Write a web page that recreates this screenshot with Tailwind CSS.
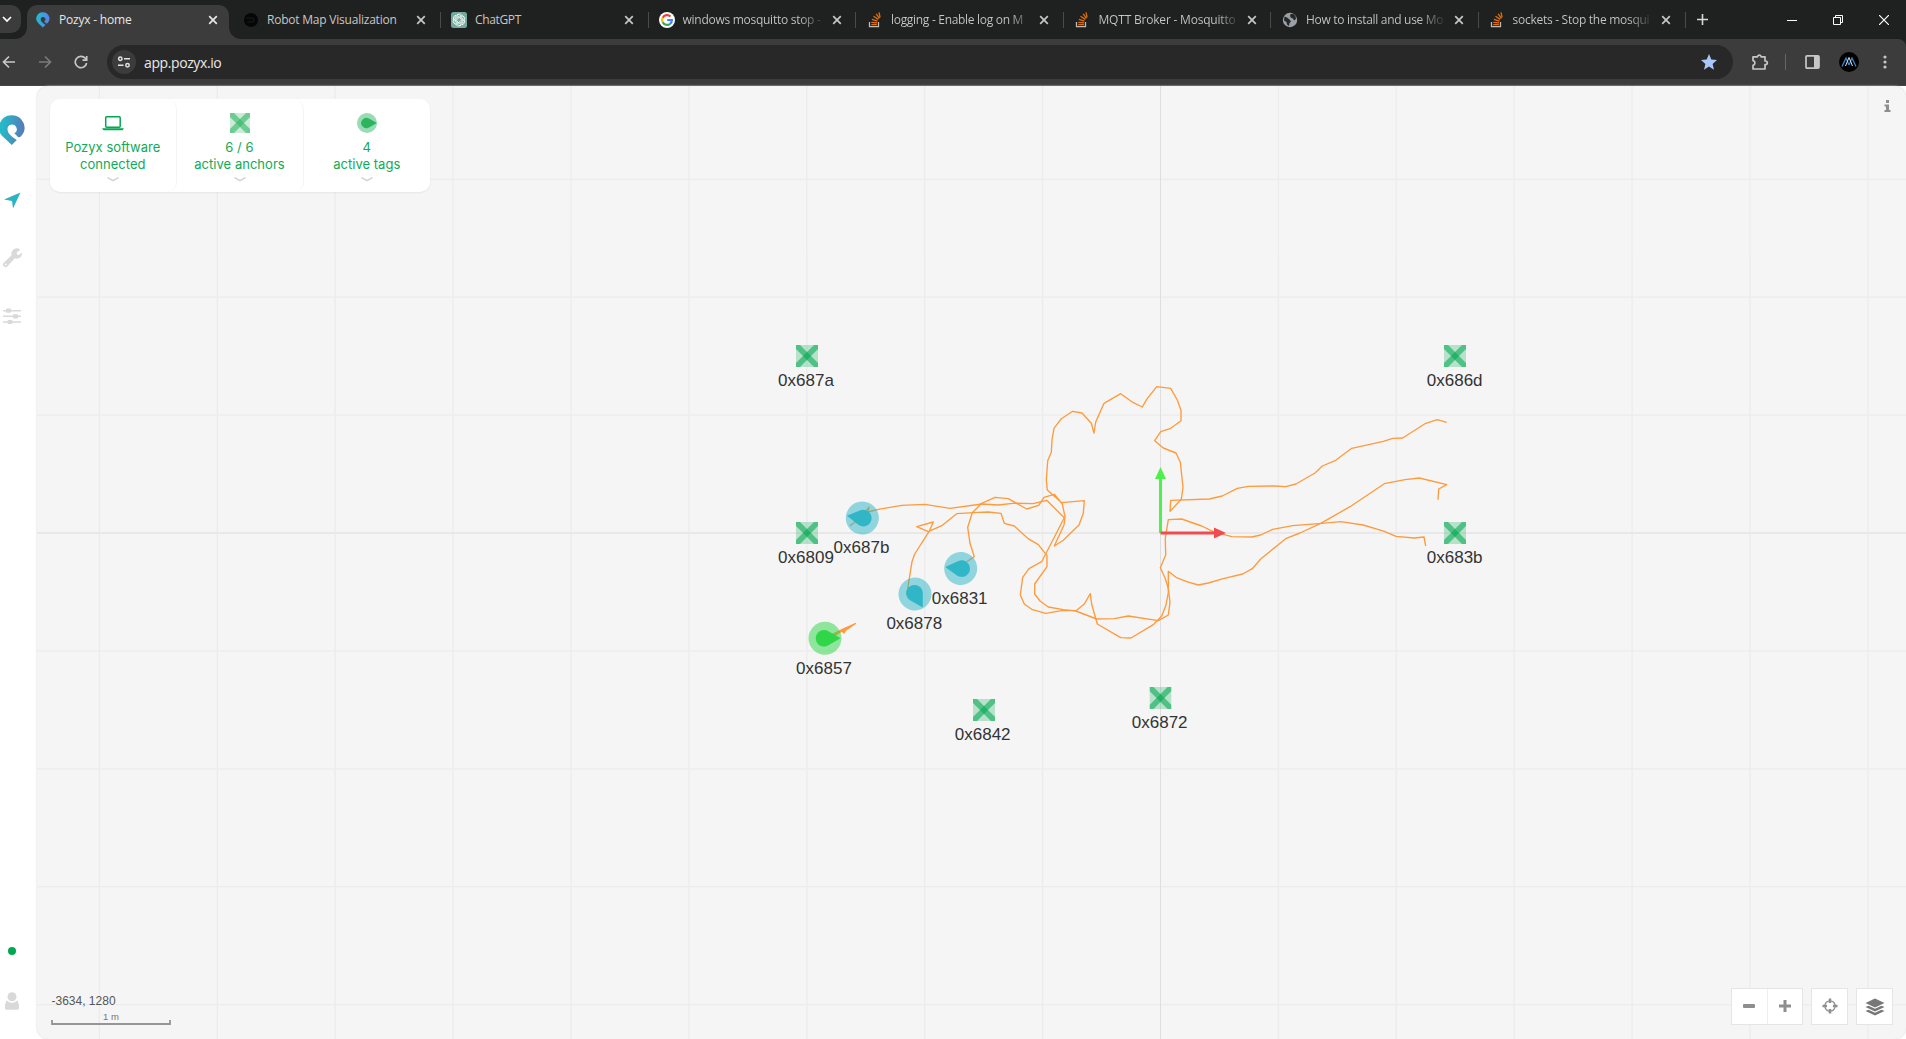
<!DOCTYPE html>
<html lang="en">
<head>
<meta charset="utf-8">
<title>Pozyx - home</title>
<script src="https://cdn.jsdelivr.net/npm/@tailwindcss/browser@4"></script>
</head>
<body class="h-screen w-screen overflow-hidden bg-white">
<svg width="0" height="0" class="absolute">
  <defs>
    <linearGradient id="brand" x1="0" x2="1" y1="0.3" y2="0.45"><stop offset="0.15" stop-color="#27b8c8"/><stop offset="1" stop-color="#5a78b8"/></linearGradient>
    <linearGradient id="brandTab" x1="0" x2="1" y1="0.3" y2="0.45"><stop offset="0.1" stop-color="#25b8cc"/><stop offset="1" stop-color="#5c7ff0"/></linearGradient>
    <symbol id="pin" viewBox="0 0 26 31">
      <path d="M13 .3A12.400 12.400 0 0 1 22 21.300Q20.700 22.700 19.300 22.200L15.300 18.300A4.600 4.600 0 1 0 8.600 15C8.800 18.500 12.500 21.500 17.800 24.900L12.800 30 4 21.800A12.400 12.400 0 0 1 13 .3Z"/>
    </symbol>
    <symbol id="x" viewBox="0 0 10 10"><path d="M1.200 1.200 8.800 8.800M8.800 1.200 1.200 8.800" fill="none" stroke="currentColor" stroke-width="1.700"/></symbol>
    <symbol id="so" viewBox="0 0 16 16">
      <path d="M2.500 10v4.700h9V10" fill="none" stroke="#bcbbbb" stroke-width="1.300"/>
      <path d="M4.300 12.700h5.600M4.300 10.300l5.700.5M4.900 7.400l5.500 1.700M6.500 4.300l4.800 3.100M9.200 1.800l3.200 4.500M12 .3l1.100 5" fill="none" stroke="#e2700f" stroke-width="1.300"/>
    </symbol>
    <symbol id="anchor" viewBox="0 0 22 22">
      <path d="M0 0H22V22H0Z" fill="#00a84f" fill-opacity=".25"/>
      <path d="M0 0H4L22 18V22H18L0 4Z" fill="#00a84f" fill-opacity=".56"/>
      <path d="M22 0H18L0 18V22H4L22 4Z" fill="#00a84f" fill-opacity=".56"/>
    </symbol>
    <symbol id="anchorSoft" viewBox="0 0 20 20">
      <path d="M0 0H20V20H0Z" fill="#c9ecd7"/>
      <path d="M0 0H4L20 16V20H16L0 4Z" fill="#34b566" fill-opacity=".6"/>
      <path d="M20 0H16L0 16V20H4L20 4Z" fill="#34b566" fill-opacity=".6"/>
    </symbol>
    <g id="tag"><circle r="16.500" fill-opacity=".5"/><path d="M15.500 0 3 -7.300A8.300 8.300 0 1 0 3 7.300Z" fill-opacity=".95"/></g>
  </defs>
</svg>
<div class="flex h-full flex-col">

  <!-- Tab strip -->
  <header class="flex h-[39px] shrink-0 bg-[#1f2120] font-['Open_Sans',sans-serif] text-[12px] text-[#c7c7c7]">
    <div class="flex w-[27px] bg-[#3c3c3c]">
      <div class="w-full rounded-br-xl bg-[#1f2120] pt-[5px]">
        <div class="flex h-7 w-[21px] items-center rounded-r-[10px] bg-[#3c3c3c] pl-[2px] text-white"><svg width="10" height="10" viewBox="0 0 10 10"><path d="M1 3l4 4 4-4" fill="none" stroke="currentColor" stroke-width="1.700"/></svg></div>
      </div>
    </div>
    <div class="flex w-[202px] bg-[#1f2120] pt-[5px]">
      <div class="flex w-full items-center rounded-t-[10px] bg-[#3c3c3c] pr-[11px] pb-[5px] pl-2 text-[#e6e6e6]">
        <svg class="mr-2 h-4 w-4" fill="url(#brandTab)"><use href="#pin"/></svg>
        <span class="flex-1 whitespace-nowrap tracking-[-0.2px]">Pozyx - home</span>
        <svg class="h-[10px] w-[10px]"><use href="#x"/></svg>
      </div>
    </div>
    <div class="flex w-[211px] bg-[#3c3c3c]">
      <div class="flex w-full items-center rounded-bl-xl bg-[#1f2120] pr-[14px] pl-[14px]">
        <svg class="mr-[8px]" width="16" height="16" viewBox="0 0 16 16"><circle cx="8" cy="8" r="7" fill="#060606"/><path d="M3.500 6h5.500a2 2 0 0 1 0 4H4.500" fill="none" stroke="#1a1a1a" stroke-width="1.200"/></svg>
        <span class="flex-1 whitespace-nowrap tracking-[-0.22px]">Robot Map Visualization</span>
        <svg class="h-[10px] w-[10px]"><use href="#x"/></svg>
      </div>
    </div>
    <div class="flex w-[207.500px] items-center">
      <i class="h-4 w-px bg-[#4a4a4a]"></i>
      <svg class="ml-[10px]" width="16" height="16" viewBox="0 0 16 16"><rect width="16" height="16" rx="2.500" fill="#74aa9c"/><g fill="none" stroke="#eef7f4" stroke-width=".85"><path id="lobe" d="M6 8V4.300a2.500 2.500 0 0 1 4.600-1.200M6 5.500l3.300-1.900a2.400 2.400 0 0 1 3.500 1.900"/><use href="#lobe" transform="rotate(60 8 8)"/><use href="#lobe" transform="rotate(120 8 8)"/><use href="#lobe" transform="rotate(180 8 8)"/><use href="#lobe" transform="rotate(240 8 8)"/><use href="#lobe" transform="rotate(300 8 8)"/></g></svg>
      <span class="ml-2 w-[142px] whitespace-nowrap tracking-[-0.35px]">ChatGPT</span>
      <svg class="ml-[7px] h-[10px] w-[10px]"><use href="#x"/></svg>
    </div>
    <div class="flex w-[207.500px] items-center">
      <i class="h-4 w-px bg-[#4a4a4a]"></i>
      <svg class="ml-[10px]" width="16" height="16" viewBox="0 0 16 16"><circle cx="8" cy="8" r="8" fill="#fff"/><g fill="none" stroke-width="2.200"><path d="M11.500 4.600A4.900 4.900 0 0 0 3.700 5.700" stroke="#ea4335"/><path d="M3.700 5.700a4.900 4.900 0 0 0 0 4.600" stroke="#fbbc05"/><path d="M3.700 10.300a4.900 4.900 0 0 0 7.400 1.500" stroke="#34a853"/><path d="M11.100 11.800A4.900 4.900 0 0 0 12.900 8H8.200" stroke="#4285f4"/></g></svg>
      <span class="ml-2 w-[142px] bg-linear-to-r from-[#c7c7c7] from-82% to-transparent bg-clip-text whitespace-nowrap tracking-[-0.27px] text-transparent">windows mosquitto stop -</span>
      <svg class="ml-[7px] h-[10px] w-[10px]"><use href="#x"/></svg>
    </div>
    <div class="flex w-[207.500px] items-center">
      <i class="h-4 w-px bg-[#4a4a4a]"></i>
      <svg class="ml-[11px] h-4 w-4"><use href="#so"/></svg>
      <span class="ml-2 w-[141px] bg-linear-to-r from-[#c7c7c7] from-85% to-transparent bg-clip-text whitespace-nowrap tracking-[-0.3px] text-transparent">logging - Enable log on M</span>
      <svg class="ml-[7px] h-[10px] w-[10px]"><use href="#x"/></svg>
    </div>
    <div class="flex w-[207.500px] items-center">
      <i class="h-4 w-px bg-[#4a4a4a]"></i>
      <svg class="ml-[10px] h-4 w-4"><use href="#so"/></svg>
      <span class="ml-[9px] w-[141px] bg-linear-to-r from-[#c7c7c7] from-85% to-transparent bg-clip-text whitespace-nowrap tracking-[-0.2px] text-transparent">MQTT Broker - Mosquitto</span>
      <svg class="ml-[7px] h-[10px] w-[10px]"><use href="#x"/></svg>
    </div>
    <div class="flex w-[207.500px] items-center">
      <i class="h-4 w-px bg-[#4a4a4a]"></i>
      <svg class="ml-[11px]" width="16" height="16" viewBox="0 0 16 16"><circle cx="8" cy="8" r="7.200" fill="#9aa0a6"/><path d="M2.500 4.500 5 5.500 7.500 7.500 9 9.500 7.500 11 7 14 5 12.500 4.500 10 2 8.500ZM8 2.500 11 1.500 13.500 4 14 7 12 8.500 11 6.500 8.500 5.500Z" fill="#26292b"/></svg>
      <span class="ml-2 w-[141px] bg-linear-to-r from-[#c7c7c7] from-80% to-transparent bg-clip-text whitespace-nowrap tracking-[-0.3px] text-transparent">How to install and use Mo</span>
      <svg class="ml-[7px] h-[10px] w-[10px]"><use href="#x"/></svg>
    </div>
    <div class="flex w-[207px] items-center">
      <i class="h-4 w-px bg-[#4a4a4a]"></i>
      <svg class="ml-[10px] h-4 w-4"><use href="#so"/></svg>
      <span class="ml-2 w-[141px] bg-linear-to-r from-[#c7c7c7] from-82% to-transparent bg-clip-text whitespace-nowrap tracking-[-0.27px] text-transparent">sockets - Stop the mosqui</span>
      <svg class="ml-[7px] h-[10px] w-[10px]"><use href="#x"/></svg>
    </div>
    <div class="flex flex-1 items-center">
      <i class="h-4 w-px bg-[#4a4a4a]"></i>
      <svg class="ml-[11px]" width="11" height="11" viewBox="0 0 11 11"><path d="M5.500 0v11M0 5.500h11" stroke="#d8d8d8" stroke-width="1.600"/></svg>
      <div class="ml-auto flex items-center gap-9 pr-[17px]">
        <svg width="10" height="10" viewBox="0 0 10 10"><path d="M0 5.500h10" stroke="#fff"/></svg>
        <svg width="10" height="10" viewBox="0 0 10 10"><path d="M.5 2.500h7v7h-7ZM2.500 2.500v-2h7v7h-2" fill="none" stroke="#fff"/></svg>
        <svg width="10" height="10" viewBox="0 0 10 10"><path d="M0 0 10 10M10 0 0 10" stroke="#fff" stroke-width="1.200"/></svg>
      </div>
    </div>
  </header>

  <!-- Address bar -->
  <div class="shrink-0 bg-[#1f2120]">
    <div class="flex h-[47px] items-center rounded-tr-lg border-b border-[#4a4446] bg-[#3c3c3c] pr-[15px] pl-[2px] text-[#c7c7c7]">
      <svg width="14" height="14" viewBox="0 0 14 14"><path d="M13 7H2M7 1.500 1.500 7 7 12.500" fill="none" stroke="currentColor" stroke-width="1.700"/></svg>
      <svg class="ml-[22px] text-[#7b7b7b]" width="14" height="14" viewBox="0 0 14 14"><path d="M1 7h11M7 1.500 12.500 7 7 12.500" fill="none" stroke="currentColor" stroke-width="1.700"/></svg>
      <svg class="ml-[22px]" width="14" height="14" viewBox="0 0 14 14"><path d="M12.600 8A5.700 5.700 0 1 1 11.300 3.300L12.300 4.500M12.700 1v4.200H8.500" fill="none" stroke="currentColor" stroke-width="1.700"/></svg>
      <div class="ml-[19px] flex h-[34px] w-[1626px] items-center rounded-full bg-[#282828] pr-4 pl-[5px]">
        <span class="flex h-6 w-6 items-center justify-center rounded-full bg-[#3c3c3c]"><svg width="14" height="12" viewBox="0 0 14 12"><g fill="none" stroke="#e3e3e3" stroke-width="1.500"><circle cx="3.300" cy="2.700" r="1.700"/><path d="M7 2.700h6M1 9.300h5.500"/><circle cx="10.500" cy="9.300" r="1.700"/></g></svg></span>
        <span class="ml-2 flex-1 font-['Open_Sans',sans-serif] text-[14px] tracking-[-0.4px] text-[#e8e8e8]">app.pozyx.io</span>
        <svg width="16" height="16" viewBox="0 0 16 16"><path d="M8 0l2.300 5.600 5.700.500-4.400 3.800L13 15.700 8 12.600 3 15.700 4.400 9.900 0 6.100l5.700-.5Z" fill="#a8c7fa"/></svg>
      </div>
      <svg class="ml-[18px]" width="18" height="18" viewBox="0 0 18 18"><path d="M2 3.800H6.500V3.300a2 2 0 0 1 3.600 0V3.800H14V8h.5a1.800 1.800 0 0 1 0 3.600H14V16H2V12.300a2.400 2.400 0 0 0 0-4.700Z" fill="none" stroke="currentColor" stroke-width="1.700" stroke-linejoin="round"/></svg>
      <i class="ml-[16px] h-4 w-px bg-[#666]"></i>
      <svg class="ml-[19px]" width="15" height="14" viewBox="0 0 15 14"><rect x="1" y=".9" width="13" height="12.200" rx="1" fill="none" stroke="currentColor" stroke-width="1.700"/><path d="M9 1h5v12H9Z" fill="currentColor"/></svg>
      <svg class="ml-[19px]" width="20" height="20" viewBox="0 0 20 20"><circle cx="10" cy="10" r="10" fill="#000"/><path d="M3 14.500 7 6l3 7M17 14.500 13 6l-3 7" fill="none" stroke="#3b86c8" stroke-width="1.300"/><path d="M6.500 14 10 5.500l3.500 8.500" fill="none" stroke="#d7e5f0" stroke-width="1"/></svg>
      <svg class="ml-auto mr-1" width="4" height="14" viewBox="0 0 4 14"><g fill="currentColor"><circle cx="2" cy="2" r="1.600"/><circle cx="2" cy="7" r="1.600"/><circle cx="2" cy="12" r="1.600"/></g></svg>
    </div>
  </div>

  <!-- App -->
  <div class="flex min-h-0 flex-1">
    <nav class="flex w-[37px] shrink-0 flex-col items-start rounded-r-xl bg-white text-[#d9d9d9]">
      <svg class="mt-[29px] -ml-[1px]" width="26" height="31" fill="url(#brand)"><use href="#pin"/></svg>
      <svg class="mt-[46px] ml-1" width="17" height="17" viewBox="0 0 17 17"><path d="M16.500.5 9 16.500 8 9 0 7.500Z" fill="#2cb4c5"/></svg>
      <svg class="mt-[39px] ml-[2px]" width="20" height="20" viewBox="0 0 20 20"><path d="M18.300 1.700 14.700 4.500l.3 2 2 .5L20 4.500A5.400 5.400 0 0 1 12.700 10.300L5.500 18.200A2.500 2.500 0 0 1 1.700 14.700L9.600 7.300A5.400 5.400 0 0 1 18.300 1.700Z" fill="currentColor"/><circle cx="3.800" cy="16.300" r=".9" fill="#fff"/></svg>
      <svg class="mt-[40px] ml-[3px]" width="18" height="17" viewBox="0 0 18 17"><path d="M0 2.700h18M0 8.300h18M0 14h18" stroke="currentColor" stroke-width="1.500"/><g fill="currentColor"><rect x="3" y=".6" width="5" height="4.200" rx="1"/><rect x="10" y="6.200" width="5" height="4.200" rx="1"/><rect x="4.500" y="11.900" width="5" height="4.200" rx="1"/></g></svg>
      <i class="mt-auto ml-2 h-2 w-2 rounded-full bg-[#00a84f]"></i>
      <svg class="mt-[37px] mb-[29px] ml-1" width="16" height="18" viewBox="0 0 16 18"><circle cx="8" cy="4.700" r="4.500" fill="currentColor"/><path d="M3 8.500a6.300 6.300 0 0 0 10 0c2 1.500 3 8.500 1 9.300H2C0 17 1 10 3 8.500Z" fill="currentColor"/></svg>
    </nav>

    <main class="relative flex-1 overflow-hidden rounded-xl bg-[#f5f5f5] shadow-[0_0_2px_#ccc]">
      <svg class="absolute inset-0 font-['Liberation_Sans',sans-serif]" width="1869" height="953" viewBox="37 86 1869 953">
        <g fill="none" stroke="#ececec" stroke-width="1.300">
          <path d="M99.400 86V1039M217.300 86V1039M335.200 86V1039M453.100 86V1039M571 86V1039M688.900 86V1039M806.800 86V1039M924.700 86V1039M1042.600 86V1039M1278.400 86V1039M1396.300 86V1039M1514.200 86V1039M1632.100 86V1039M1750 86V1039M1867.900 86V1039"/>
          <path d="M37 179.300H1906M37 297.200H1906M37 415.100H1906M37 650.900H1906M37 768.800H1906M37 886.700H1906M37 1004.600H1906"/>
          <path d="M37 533H1906" stroke="#e8e8e8" stroke-width="2"/>
          <path d="M1160.500 86V1039" stroke="#dedede" stroke-width="1"/>
        </g>
        <!-- Tag trails -->
        <g fill="none" stroke="#ff9a3d" stroke-width="1.350" stroke-linejoin="round">
          <polyline points="850,525.700 860,518.300 869,507.300 868,512 878.300,509.300 901.700,505.300 925,504.300 950,508.300 981.700,504 998.300,505 1015,503.200 1033,503.700 1046.700,500.300 1064.300,517.700 1041.700,561.700 1029,568.700 1022.700,577.300 1020.300,595 1024.300,604 1031.700,609.300 1045.700,613.300 1061.700,610.700 1076.700,610.300 1084.300,604 1090.300,593.700 1091.700,604.300 1097.300,624 1120.700,637.700 1131,638 1153.300,624.700 1161.700,616 1166,605 1168.300,592.700 1168.300,571.300 1176,577.300 1186.700,581.700 1198.300,585 1208.300,583 1223.300,578.700 1242.700,574 1252.300,568.700 1260.700,559 1285.700,538.700 1300,533 1320.700,523.300 1350,506.700 1384.300,483.700 1405,479.700 1419.300,478 1446.700,484.700 1438.700,489 1438,499.700"/>
          <polyline points="966.700,561.700 974.300,556.700 970,543.300 967.700,527.300 972.300,512.700 981.700,503.300 995,497.300 1008.300,498.700 1026.700,509 1038.700,505.300 1044,497.300 1054.300,494.300 1062.300,504 1065,516.700 1064,525 1054.300,546 1063.300,540.300 1079,525 1083.300,513.300 1084.300,500.700 1061.700,502.700 1047.300,490 1046.300,480 1047.700,460.700 1051.300,452.300 1052,440 1054,428.300 1061.300,418.700 1072.700,411.300 1082,413 1091.300,423.300 1094,433 1095.700,422 1104,403.300 1120.700,393.700 1133.300,402.700 1142.300,407 1146.700,399.300 1156.700,386.700 1170.700,388.300 1177.300,400 1181,410.300 1181,420.700 1170.700,428.300 1160.700,431.700 1154.700,440.700 1163.300,448 1176,453 1180.300,462.300 1183,487.300 1181.300,499.300 1170,511.300 1170.700,500.300 1209.300,499 1222.300,496 1237.300,488.300 1248.300,486.300 1274.300,486 1285.700,486.700 1296,484 1315,473 1322.300,466 1335.700,460.300 1351.700,448.300 1383.300,441.300 1392.700,438.300 1402.700,438 1425.700,423.300 1437.300,419.700 1446.700,422.300"/>
          <polyline points="906.700,595 912,561.700 914.700,554 929,531.700 933.300,522 916.700,526.700 928.300,531.700 942.300,525.300 956.700,513.700 978,512.300 988.300,512 1001,513.300 1004.300,523.300 1014.300,526 1027.700,538.300 1038.300,544.700 1047,555.700 1047,566.700 1034.700,584 1034.700,594 1040,601 1048.300,607 1063.300,609.700 1075.700,611 1096.700,619 1114.300,618.700 1128.300,616 1158.300,620.700 1168.300,615 1170,602.300 1168.300,588.300 1165,577.700 1160.300,567.700 1165.700,555 1165.300,538.300 1168.300,519.700 1181.700,519 1201.700,526 1213.300,531.700 1231.700,536.700 1251.700,537 1260.700,535 1272.700,529.300 1292.700,525.700 1321.700,523.300 1340.700,521.700 1363.300,525 1384.300,531.300 1396,536.300 1414,538 1424,537 1425.700,546"/>
          <path d="M832 634.500 843 629 855.500 623.500 846 630 844 633 842 631 834 636Z" fill="#ff9a3d"/>
        </g>
        <!-- Origin axes -->
        <path d="M1160.500 533V476" stroke="#4ef04c" stroke-width="3"/><path d="M1155 479 1160.500 467 1166 479Z" fill="#4ef04c"/>
        <path d="M1160.500 533H1217" stroke="#f04c50" stroke-width="3"/><path d="M1214 527.500 1226 533 1214 538.500Z" fill="#f04c50"/>
        <!-- Anchors -->
        <use href="#anchor" x="796" y="345" width="22" height="22"/><use href="#anchor" x="796" y="522" width="22" height="22"/>
        <use href="#anchor" x="1444" y="345" width="22" height="22"/><use href="#anchor" x="1444" y="522" width="22" height="22"/>
        <use href="#anchor" x="973" y="699" width="22" height="22"/><use href="#anchor" x="1149.500" y="687" width="22" height="22"/>
        <!-- Tags -->
        <use href="#tag" transform="translate(862.300 518) rotate(188)" fill="#2cb4c5"/>
        <use href="#tag" transform="translate(960.700 568.500) rotate(186)" fill="#2cb4c5"/>
        <use href="#tag" transform="translate(915 594) rotate(60)" fill="#2cb4c5"/>
        <use href="#tag" transform="translate(825 638.300)" fill="#2ad643"/>
        <g fill="#333" font-size="17" text-anchor="middle">
          <text x="806" y="386">0x687a</text><text x="806" y="563">0x6809</text><text x="861.500" y="553">0x687b</text><text x="959.700" y="603.500">0x6831</text><text x="914.300" y="629">0x6878</text><text x="824" y="673.500">0x6857</text><text x="982.700" y="739.500">0x6842</text><text x="1159.700" y="727.500">0x6872</text><text x="1454.700" y="386">0x686d</text><text x="1454.700" y="563">0x683b</text>
        </g>
        <text x="51.500" y="1005" font-size="12" fill="#555">-3634, 1280</text>
        <text x="111" y="1020" font-size="9.500" fill="#777" text-anchor="middle">1 m</text>
        <path d="M52 1020v4h118v-4" fill="none" stroke="#959595" stroke-width="1.800"/>
      </svg>

      <!-- Status summary -->
      <section class="absolute top-[13px] left-[13px] flex h-[93px] w-[380px] rounded-[10px] bg-white text-center font-['Inter',sans-serif] text-[13px] leading-[17px] tracking-[0.03px] text-[#10aa58] shadow-[0_1px_2px_#0001]">
        <div class="flex w-[126.500px] flex-col items-center rounded-r-[10px] border-r border-[#f4f4f4] pt-[14px]">
          <svg width="22" height="20" viewBox="0 0 22 20"><rect x="3.700" y="3.700" width="14.500" height="10.600" rx="1" fill="none" stroke="#00a84f" stroke-width="1.500"/><path d="M0 15.300H22L20.500 17.300H1.500Z" fill="#00a84f"/></svg>
          <p class="mt-[6px]">Pozyx software<br>connected</p>
          <svg class="mt-1" width="12" height="5" viewBox="0 0 12 5"><path d="M.5.700 6 3.700 11.500.7" fill="none" stroke="#d2d2d2" stroke-width="1.500"/></svg>
        </div>
        <div class="flex w-[127px] flex-col items-center rounded-r-[10px] border-r border-[#f4f4f4] pt-[14px]">
          <svg width="20" height="20"><use href="#anchorSoft"/></svg>
          <p class="mt-[6px]">6 / 6<br>active anchors</p>
          <svg class="mt-1" width="12" height="5" viewBox="0 0 12 5"><path d="M.5.700 6 3.700 11.500.7" fill="none" stroke="#d2d2d2" stroke-width="1.500"/></svg>
        </div>
        <div class="flex flex-1 flex-col items-center pt-[14px]">
          <svg width="20" height="20" viewBox="0 0 20 20"><circle cx="10" cy="10" r="10" fill="#99dbb5"/><path d="M19.800 10 12 5.500A5.200 5.200 0 1 0 12 14.500Z" fill="#2db55d"/></svg>
          <p class="mt-[6px]">4<br>active tags</p>
          <svg class="mt-1" width="12" height="5" viewBox="0 0 12 5"><path d="M.5.700 6 3.700 11.500.7" fill="none" stroke="#d2d2d2" stroke-width="1.500"/></svg>
        </div>
      </section>

      <svg class="absolute top-[14px] right-[15px]" width="7" height="12" viewBox="0 0 7 12"><path d="M2 0H5V3H2ZM.5 4.500H5V10H6.500V12H.5V10H2V6.500H.5Z" fill="#8e8e8e"/></svg>

      <!-- Map controls -->
      <div class="absolute right-[13px] bottom-[14px] flex gap-2 text-[#8e8e8e]">
        <div class="flex h-[37px] w-[72px] border border-[#e5e5e5] bg-white">
          <button class="flex flex-1 items-center justify-center border-r border-[#eee] pb-[2px]"><svg width="12" height="12" viewBox="0 0 12 12"><rect y="4" width="12" height="4" rx="1" fill="currentColor"/></svg></button>
          <button class="flex flex-1 items-center justify-center pb-[2px]"><svg width="12" height="12" viewBox="0 0 12 12"><path d="M6 0V12M0 6H12" stroke="currentColor" stroke-width="3"/></svg></button>
        </div>
        <button class="flex h-[37px] w-[37px] items-center justify-center border border-[#e5e5e5] bg-white pb-px"><svg width="16" height="16" viewBox="0 0 16 16"><circle cx="8" cy="8" r="5.200" fill="none" stroke="currentColor" stroke-width="1.300"/><path d="M8 .5V5M8 11v4.500M.5 8H5M11 8h4.500" stroke="currentColor" stroke-width="2.500"/></svg></button>
        <button class="flex h-[37px] w-[37px] items-center justify-center border border-[#e5e5e5] bg-white text-[#777]"><svg width="20" height="18" viewBox="0 0 20 18"><path d="M10 .5 19.500 5 10 9.500.5 5ZM.5 9 3.500 7.800 10 10.800 16.500 7.800 19.500 9 10 13.500ZM.5 13 3.500 11.800 10 14.800 16.500 11.800 19.500 13 10 17.500Z" fill="currentColor"/></svg></button>
      </div>
    </main>
  </div>
</div>
</body>
</html>
